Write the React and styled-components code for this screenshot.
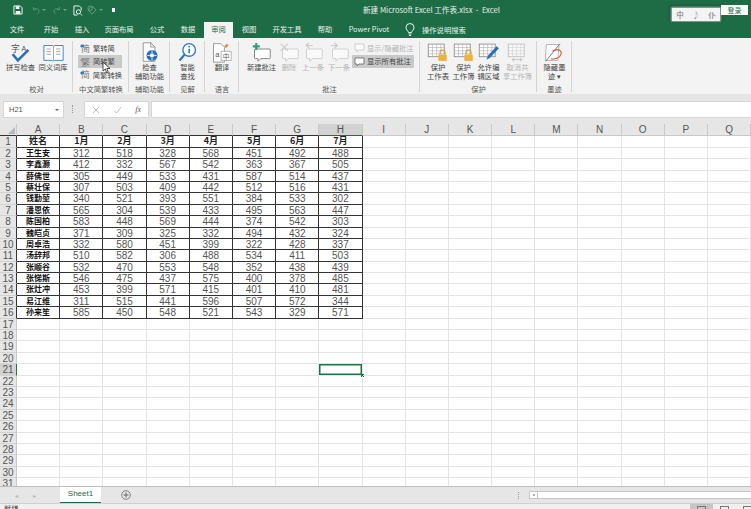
import styled, { createGlobalStyle } from "styled-components";

const columns = ["A", "B", "C", "D", "E", "F", "G", "H", "I", "J", "K", "L", "M", "N", "O", "P", "Q"];

const sheetData = [
  ["姓名", "1月", "2月", "3月", "4月", "5月", "6月", "7月"],
  ["王生安", 312, 518, 328, 568, 451, 492, 488],
  ["李鑫灏", 412, 332, 567, 542, 363, 367, 505],
  ["薛佛世", 305, 449, 533, 431, 587, 514, 437],
  ["蔡壮保", 307, 503, 409, 442, 512, 516, 431],
  ["钱勤堃", 340, 521, 393, 551, 384, 533, 302],
  ["潘恩依", 565, 304, 539, 433, 495, 563, 447],
  ["陈国柏", 583, 448, 569, 444, 374, 542, 303],
  ["魏皑贞", 371, 309, 325, 332, 494, 432, 324],
  ["周卓浩", 332, 580, 451, 399, 322, 428, 337],
  ["汤辞邦", 510, 582, 306, 488, 534, 411, 503],
  ["张顺谷", 532, 470, 553, 548, 352, 438, 439],
  ["张悌斯", 546, 475, 437, 575, 400, 378, 485],
  ["张灶冲", 453, 399, 571, 415, 401, 410, 481],
  ["易江维", 311, 515, 441, 596, 507, 572, 344],
  ["孙来笙", 585, 450, 548, 521, 543, 329, 571],
];

const tabs = [
  ["文件", 34],
  ["开始", 34],
  ["插入", 28],
  ["页面布局", 46],
  ["公式", 30],
  ["数据", 32],
  ["审阅", 29, true],
  ["视图", 32],
  ["开发工具", 44],
  ["帮助", 32],
  ["Power Pivot", 56],
];

const ROW_COUNT = 31;

const SpellIcon = () => (
  <svg width="24" height="24" viewBox="0 0 24 24">
    <text x="1" y="11" fontSize="10" fill="#555" fontFamily="Noto Sans CJK SC">字</text>
    <text x="13" y="10" fontSize="8" fill="#555" fontFamily="Liberation Sans">A</text>
    <path d="M3 14l6 7L21 9" fill="none" stroke="#2b6fb5" strokeWidth="3" />
  </svg>
);

const BookIcon = () => (
  <svg width="24" height="24" viewBox="0 0 24 24">
    <path d="M1 4h10l1 1 1-1h10v17H13l-1 1-1-1H1z" fill="#fff" stroke="#2b7cc2" />
    <path d="M12 5v16M4 8h5M4 11h5M4 14h5M15 8h5M15 11h5M15 14h5" stroke="#999" />
  </svg>
);

const SmallCharIcon = ({ char, color = "#2b7cc2" }) => (
  <svg width="11" height="11" viewBox="0 0 11 11">
    <text x="1" y="9.5" fontSize="9" fill="#777" fontFamily="Noto Sans CJK SC">{char}</text>
    <path d="M0 4l2-2v1h2v2H2v1z" fill={color} />
  </svg>
);

const CheckDocIcon = () => (
  <svg width="24" height="25" viewBox="0 0 24 25">
    <path d="M5 1h9l5 5v17H5z" fill="#fff" stroke="#888" />
    <path d="M14 1v5h5" fill="none" stroke="#888" />
    <circle cx="15.5" cy="16" r="6.5" fill="#2b6fb5" />
    <circle cx="15.5" cy="16" r="2.5" fill="#fff" />
    <path d="M15.5 10v3M15.5 19v3M10 16h3M18 16h3" stroke="#fff" />
  </svg>
);

const SearchIcon = () => (
  <svg width="24" height="25" viewBox="0 0 24 25">
    <circle cx="14.5" cy="9.5" r="7.5" fill="#fff" stroke="#2b7cc2" strokeWidth="1.6" />
    <path d="M9 15l-6 7" stroke="#2b6fb5" strokeWidth="2.6" />
    <path d="M14.5 8v5.5" stroke="#2b6fb5" strokeWidth="1.8" />
    <circle cx="14.5" cy="5.6" r="1" fill="#2b6fb5" />
  </svg>
);

const TranslateIcon = () => (
  <svg width="26" height="25" viewBox="0 0 26 25">
    <path d="M3 2h9l4 4v18H3z" fill="#fff" stroke="#888" />
    <path d="M16 5l3-3 2 2-3 3z" fill="#d98a3a" />
    <rect x="12" y="11" width="12" height="11" fill="#fff" stroke="#aaa" />
    <text x="5" y="18" fontSize="9" fill="#555" fontFamily="Liberation Sans">a</text>
    <text x="14" y="20" fontSize="8" fill="#555" fontFamily="Noto Sans CJK SC">中</text>
  </svg>
);

const NoteIcon = ({ mark, dim }) => (
  <svg width="24" height="24" viewBox="0 0 24 24" opacity={dim ? 0.55 : 1}>
    <path
      d="M5 8h16a1 1 0 0 1 1 1v9a1 1 0 0 1-1 1H11l-3 3v-3H5a1 1 0 0 1-1-1V9a1 1 0 0 1 1-1z"
      fill="#fff"
      stroke={dim ? "#aaa" : "#777"}
    />
    {mark === "new" && <path d="M6 1v8M2 5h8" stroke="#2f9e77" strokeWidth="2.4" />}
    {mark === "delete" && <path d="M2 2l8 8M10 2l-8 8" stroke="#999" strokeWidth="1.2" />}
    {mark === "prev" && <path d="M11 4H4M7 1L3.5 4 7 7" fill="none" stroke="#aaa" strokeWidth="1.4" />}
    {mark === "next" && <path d="M2 4h7M6 1l3.5 3L6 7" fill="none" stroke="#aaa" strokeWidth="1.4" />}
  </svg>
);

const SmallNoteIcon = ({ dim }) => (
  <svg width="11" height="11" viewBox="0 0 11 11" opacity={dim ? 0.6 : 1}>
    <path d="M1 2h9v6H5L3 10V8H1z" fill="#fff" stroke={dim ? "#aaa" : "#666"} strokeWidth="0.8" />
  </svg>
);

const ProtectIcon = ({ lock, pen, arrows, dim }) => (
  <svg width="26" height="25" viewBox="0 0 26 25" opacity={dim ? 0.5 : 1}>
    <rect x="1.5" y="2.5" width="19" height="15" fill="#fff" stroke="#888" />
    <path d="M1.5 6.5h19M1.5 10.5h19M1.5 14h19M6.5 3v14M11.5 3v14M16.5 3v14" stroke="#aaa" strokeWidth="0.7" />
    {lock && (
      <g>
        <path d="M15.5 15v-2.5a3 3 0 0 1 6 0V15" fill="none" stroke="#d99a2e" strokeWidth="1.3" />
        <rect x="13.5" y="15" width="10" height="7.5" fill="#f0b23c" />
      </g>
    )}
    {pen && <path d="M10 21l2-5L22 5l3 2.500L14 19z" fill="#2b6fb5" />}
    {arrows && <path d="M6 21h12M6 21l2.500-2M6 21l2.500 2M18 21l-2.500-2M18 21l-2.500 2" fill="none" stroke="#888" />}
  </svg>
);

const InkIcon = () => (
  <svg width="24" height="25" viewBox="0 0 24 25">
    <rect x="3" y="3" width="15" height="19" fill="#fff" stroke="#aaa" transform="skewX(-4)" />
    <path d="M2 23L19 2" stroke="#666" />
    <path d="M10 11c6-4 12-1 10 4-1 4-7 6-12 5" fill="none" stroke="#d2552f" strokeWidth="1.2" />
  </svg>
);

const BulbIcon = () => (
  <svg width="10" height="13" viewBox="0 0 10 13">
    <path d="M3.500 9.500C3 7.500 1 7 1 4.500a4 4 0 0 1 8 0C9 7 7 7.500 6.500 9.500zM3.500 11h3M4 12.500h2" fill="none" stroke="#fff" strokeWidth="0.9" />
  </svg>
);

const App = () => {
  return (
    <Page>
      <GlobalStyle />
      <TitleBar>
        <QuickAccess>
          <QatItem $width={18}>
            <svg width="10" height="10" viewBox="0 0 11 11">
              <path d="M1 1h7l2 2v7H1z" fill="none" stroke="#fff" />
              <path d="M3 1.500h4v3H3zM3 6.500h5V10H3z" fill="#fff" />
            </svg>
          </QatItem>
          <QatItem $width={11}>
            <svg width="10" height="9" viewBox="0 0 12 10">
              <path d="M3 1v3h3M3.500 4c2-2 6-1.500 6 2 0 1-.5 2-1.500 3" fill="none" stroke="#5f9a7c" strokeWidth="1.1" />
            </svg>
          </QatItem>
          <QatItem $width={10}><Caret /></QatItem>
          <QatItem $width={11}>
            <svg width="10" height="9" viewBox="0 0 12 10">
              <path d="M9 1v3H6M8.500 4c-2-2-6-1.500-6 2 0 1 .5 2 1.500 3" fill="none" stroke="#5f9a7c" strokeWidth="1.1" />
            </svg>
          </QatItem>
          <QatItem $width={10}><Caret /></QatItem>
          <QatItem $width={14}>
            <svg width="10" height="11" viewBox="0 0 11 12">
              <path d="M1 1h6l2 2v3M1 1v10h4" fill="none" stroke="#fff" />
              <circle cx="6" cy="7.500" r="2.300" fill="none" stroke="#fff" />
              <path d="M8 9.500l2 2" stroke="#fff" />
            </svg>
          </QatItem>
          <QatItem $width={12}>
            <svg width="10" height="10" viewBox="0 0 11 11">
              <path d="M5.500 1l4.500 4.500-4.500 4.500L1 5.500z" fill="none" stroke="#6aa185" />
              <circle cx="3.500" cy="3.500" r="2.500" fill="none" stroke="#6aa185" />
            </svg>
          </QatItem>
          <QatItem $width={13}><Caret /></QatItem>
          <MoreDot />
        </QuickAccess>
        <WindowTitle>新建 Microsoft Excel 工作表.xlsx&nbsp; - &nbsp;Excel</WindowTitle>
        <ImeBar>
          <span>中</span>
          <span>♪</span>
          <span>仆</span>
        </ImeBar>
        <LoginButton>登录</LoginButton>
      </TitleBar>

      <TabBar>
        {tabs.map(([label, width, active]) => (
          <Tab key={label} $width={width} $active={active}>
            {label}
          </Tab>
        ))}
        <SearchHint>
          <BulbIcon />
          <span>操作说明搜索</span>
        </SearchHint>
      </TabBar>

      <Ribbon>
        <Group $width={73}>
          <GroupBody>
            <BigButton $width={33}>
              <IconSlot><SpellIcon /></IconSlot>
              <BigLabel>拼写检查</BigLabel>
            </BigButton>
            <BigButton $width={32}>
              <IconSlot><BookIcon /></IconSlot>
              <BigLabel>同义词库</BigLabel>
            </BigButton>
          </GroupBody>
          <GroupLabel>校对</GroupLabel>
        </Group>

        <Group $width={56}>
          <SmallStack $left={5}>
            <SmallButton>
              <SmallCharIcon char="简" />
              繁转简
            </SmallButton>
            <SmallButton $active>
              <SmallCharIcon char="繁" color="#999" />
              简转繁
              <CursorArrow viewBox="0 0 9 13">
                <path d="M1 1v9l2.300-2 1.500 4 1.500-.6-1.500-3.900H8z" fill="#fff" stroke="#222" strokeWidth="0.8" />
              </CursorArrow>
            </SmallButton>
            <SmallButton>
              <SmallCharIcon char="简" />
              简繁转换
            </SmallButton>
          </SmallStack>
          <GroupLabel>中文简繁转换</GroupLabel>
        </Group>

        <Group $width={41}>
          <GroupBody>
            <BigButton $width={40}>
              <IconSlot><CheckDocIcon /></IconSlot>
              <BigLabel>检查</BigLabel>
              <BigLabel>辅助功能</BigLabel>
            </BigButton>
          </GroupBody>
          <GroupLabel>辅助功能</GroupLabel>
        </Group>

        <Group $width={35}>
          <GroupBody>
            <BigButton $width={34}>
              <IconSlot><SearchIcon /></IconSlot>
              <BigLabel>智能</BigLabel>
              <BigLabel>查找</BigLabel>
            </BigButton>
          </GroupBody>
          <GroupLabel>见解</GroupLabel>
        </Group>

        <Group $width={34}>
          <GroupBody>
            <BigButton $width={33}>
              <IconSlot><TranslateIcon /></IconSlot>
              <BigLabel>翻译</BigLabel>
            </BigButton>
          </GroupBody>
          <GroupLabel>语言</GroupLabel>
        </Group>

        <Group $width={181}>
          <GroupBody $left={6}>
            <BigButton $width={33}>
              <IconSlot><NoteIcon mark="new" /></IconSlot>
              <BigLabel>新建批注</BigLabel>
            </BigButton>
            <BigButton $width={22}>
              <IconSlot><NoteIcon mark="delete" dim /></IconSlot>
              <BigLabel $dim>删除</BigLabel>
            </BigButton>
            <BigButton $width={26}>
              <IconSlot><NoteIcon mark="prev" dim /></IconSlot>
              <BigLabel $dim>上一条</BigLabel>
            </BigButton>
            <BigButton $width={26}>
              <IconSlot><NoteIcon mark="next" dim /></IconSlot>
              <BigLabel $dim>下一条</BigLabel>
            </BigButton>
            <SmallStack $width={62}>
              <SmallButton $dim>
                <SmallNoteIcon dim />
                显示/隐藏批注
              </SmallButton>
              <SmallButton $active>
                <SmallNoteIcon />
                显示所有批注
              </SmallButton>
            </SmallStack>
          </GroupBody>
          <GroupLabel>批注</GroupLabel>
        </Group>

        <Group $width={117}>
          <GroupBody $left={5}>
            <BigButton $width={26}>
              <IconSlot><ProtectIcon lock /></IconSlot>
              <BigLabel>保护</BigLabel>
              <BigLabel>工作表</BigLabel>
            </BigButton>
            <BigButton $width={25}>
              <IconSlot><ProtectIcon lock /></IconSlot>
              <BigLabel>保护</BigLabel>
              <BigLabel>工作簿</BigLabel>
            </BigButton>
            <BigButton $width={25}>
              <IconSlot><ProtectIcon pen /></IconSlot>
              <BigLabel>允许编</BigLabel>
              <BigLabel>辑区域</BigLabel>
            </BigButton>
            <BigButton $width={33}>
              <IconSlot><ProtectIcon arrows dim /></IconSlot>
              <BigLabel $dim>取消共</BigLabel>
              <BigLabel $dim>享工作簿</BigLabel>
            </BigButton>
          </GroupBody>
          <GroupLabel>保护</GroupLabel>
        </Group>

        <Group $width={35}>
          <GroupBody>
            <BigButton $width={34}>
              <IconSlot><InkIcon /></IconSlot>
              <BigLabel>隐藏墨</BigLabel>
              <BigLabel>迹 ▾</BigLabel>
            </BigButton>
          </GroupBody>
          <GroupLabel>墨迹</GroupLabel>
        </Group>
      </Ribbon>

      <FormulaBar>
        <NameBox>
          H21
          <NameCaret />
        </NameBox>
        <Grip />
        <FormulaButtons>
          <svg width="8" height="8" viewBox="0 0 8 8">
            <path d="M1 1l6 6M7 1L1 7" stroke="#b5b5b5" strokeWidth="0.9" />
          </svg>
          <svg width="9" height="8" viewBox="0 0 9 8">
            <path d="M1 4.500L3.500 7 8 1" fill="none" stroke="#b5b5b5" strokeWidth="0.9" />
          </svg>
          <FxLabel>fx</FxLabel>
        </FormulaButtons>
        <FormulaInput />
      </FormulaBar>

      <SheetGrid>
        <CornerCell>
          <svg width="7" height="7" viewBox="0 0 7 7">
            <path d="M7 0v7H0z" fill="#b8b8b8" />
          </svg>
        </CornerCell>
        {columns.map((col, i) => (
          <ColumnHeader key={col} $selected={col === "H"} $inTable={i < 8}>
            {col}
          </ColumnHeader>
        ))}
        {Array.from({ length: ROW_COUNT }, (_, r) => (
          <Row key={r} rowIndex={r} />
        ))}
      </SheetGrid>

      <SheetBar>
        <TabArrow>◂</TabArrow>
        <TabArrow>▸</TabArrow>
        <SheetTab>Sheet1</SheetTab>
        <AddSheet>
          <svg width="10" height="10" viewBox="0 0 10 10">
            <circle cx="5" cy="5" r="4.300" fill="none" stroke="#777" strokeWidth="0.9" />
            <path d="M5 2.500v5M2.500 5h5" stroke="#666" strokeWidth="1" />
          </svg>
        </AddSheet>
        <ScrollGrip />
        <ScrollArrow>◂</ScrollArrow>
        <ScrollTrack />
      </SheetBar>

      <StatusBar>
        <StatusText>就绪</StatusText>
        <ViewGroup>
          <ViewButton $active />
          <ViewButton />
          <ViewButton />
        </ViewGroup>
      </StatusBar>
    </Page>
  );
};

const Row = ({ rowIndex }) => {
  const values = sheetData[rowIndex];
  const inTable = rowIndex < sheetData.length;
  return (
    <>
      <RowHeader $selected={rowIndex === 20} $inTable={inTable}>
        {rowIndex + 1}
      </RowHeader>
      {columns.map((col, c) => {
        const isData = inTable && c < 8;
        return (
          <Cell
            key={col}
            $data={isData}
            $title={isData && rowIndex === 0}
            $name={isData && c === 0}
            $selected={rowIndex === 20 && col === "H"}
          >
            {isData ? values[c] : null}
          </Cell>
        );
      })}
    </>
  );
};

export default App;

const uiFont = `"Noto Sans CJK SC", "Liberation Sans", sans-serif`;
const sheetFont = `"Liberation Sans Narrow", "Liberation Sans", "Noto Sans CJK SC", sans-serif`;
const excelGreen = "#1e6c46";

// Styled components
const GlobalStyle = createGlobalStyle`
  html, body {
    margin: 0;
    padding: 0;
    overflow: hidden;
    background: #fff;
  }
`;

const Page = styled.div`
  width: 751px;
  height: 509px;
  display: flex;
  flex-direction: column;
  overflow: hidden;
  font-family: ${uiFont};
  font-size: 7.3px;
  color: #444;
`;

const TitleBar = styled.div`
  height: 22px;
  flex: none;
  display: flex;
  align-items: center;
  background: ${excelGreen};
  color: #fff;
  padding-right: 3px;
`;

const QuickAccess = styled.div`
  width: 120px;
  padding-left: 13px;
  box-sizing: border-box;
  display: flex;
  align-items: center;
  height: 22px;
  padding-bottom: 2px;
`;

const QatItem = styled.div`
  width: ${(p) => p.$width}px;
  flex: none;
  display: flex;
  align-items: center;
`;

const Caret = styled.i`
  width: 0;
  height: 0;
  border-left: 2px solid transparent;
  border-right: 2px solid transparent;
  border-top: 2px solid #6aa185;
`;

const MoreDot = styled.i`
  width: 3px;
  height: 4px;
  background: #fff;
`;

const WindowTitle = styled.div`
  margin-left: 243px;
  font-size: 7.6px;
  white-space: nowrap;
  padding-bottom: 4px;
  color: #e8f1ec;
`;

const ImeBar = styled.div`
  margin-left: auto;
  margin-top: 7px;
  width: 48px;
  height: 13px;
  display: flex;
  align-items: center;
  justify-content: space-around;
  background: #f4f4f4;
  color: #999;
  font-size: 7.5px;
  font-weight: 700;
  box-shadow: 0 0 2px 1px #ffffffaa, 0 0 3px 2px #0f3d27;
`;

const LoginButton = styled.div`
  width: 27px;
  height: 10px;
  margin-left: 1px;
  margin-bottom: 2px;
  background: #fff;
  color: ${excelGreen};
  font-size: 7px;
  line-height: 10px;
  text-align: center;
`;

const TabBar = styled.div`
  height: 16px;
  flex: none;
  display: flex;
  background: ${excelGreen};
`;

const Tab = styled.div`
  width: ${(p) => p.$width}px;
  flex: none;
  text-align: center;
  line-height: 15px;
  white-space: nowrap;
  color: ${(p) => (p.$active ? excelGreen : "#e8f1ec")};
  background: ${(p) => (p.$active ? "#f3f3f3" : "transparent")};
`;

const SearchHint = styled.div`
  display: flex;
  align-items: center;
  height: 15px;
  margin-left: 8px;
  gap: 7px;
  color: #e8f1ec;
`;

const Ribbon = styled.div`
  height: 56px;
  flex: none;
  display: flex;
  background: #f3f3f3;
`;

const Group = styled.div`
  width: ${(p) => p.$width}px;
  flex: none;
  box-sizing: border-box;
  display: flex;
  flex-direction: column;
  padding-top: 3px;
  position: relative;

  &::after {
    content: "";
    position: absolute;
    right: 0;
    top: 3px;
    bottom: 2px;
    width: 1px;
    background: #d4d4d4;
  }
`;

const GroupBody = styled.div`
  flex: 1;
  display: flex;
  justify-content: center;
  ${(p) => p.$left && `justify-content: flex-start; padding-left: ${p.$left}px;`}
`;

const GroupLabel = styled.div`
  height: 10px;
  line-height: 10px;
  text-align: center;
  white-space: nowrap;
  color: #555;
`;

const BigButton = styled.div`
  width: ${(p) => p.$width}px;
  flex: none;
  display: flex;
  flex-direction: column;
  align-items: center;
`;

const IconSlot = styled.div`
  height: 22px;
  display: flex;
  align-items: center;
  justify-content: center;

  svg {
    height: 21px;
    width: auto;
  }
`;

const BigLabel = styled.div`
  line-height: 9px;
  white-space: nowrap;
  color: ${(p) => (p.$dim ? "#b3b3b3" : "#444")};
`;

const SmallStack = styled.div`
  flex: 1;
  display: flex;
  flex-direction: column;
  ${(p) => p.$left && `padding: 0 7px 0 ${p.$left}px;`}
  ${(p) => p.$width && `flex: none; width: ${p.$width}px;`}
`;

const SmallButton = styled.div`
  position: relative;
  height: 13.5px;
  display: flex;
  align-items: center;
  gap: 2px;
  padding-left: 2px;
  white-space: nowrap;
  color: ${(p) => (p.$dim ? "#b3b3b3" : "#444")};
  background: ${(p) => (p.$active ? "#c9c9c9" : "transparent")};
`;

const CursorArrow = styled.svg`
  position: absolute;
  left: 24px;
  top: 6px;
  width: 9px;
  height: 13px;
`;

const FormulaBar = styled.div`
  height: 30px;
  flex: none;
  box-sizing: border-box;
  padding: 7px 0 6px 3px;
  display: flex;
  align-items: stretch;
  background: #e6e6e6;
`;

const NameBox = styled.div`
  position: relative;
  width: 61px;
  box-sizing: border-box;
  background: #fff;
  border: 1px solid #d6d6d6;
  padding-left: 5px;
  line-height: 15px;
  font-size: 7.5px;
  font-family: "Liberation Sans", sans-serif;
  color: #555;
`;

const NameCaret = styled.i`
  position: absolute;
  right: 4px;
  top: 7px;
  width: 0;
  height: 0;
  border-left: 2.5px solid transparent;
  border-right: 2.5px solid transparent;
  border-top: 2.5px solid #666;
`;

const Grip = styled.div`
  width: 2px;
  height: 8px;
  margin: 4px 9px 0 8px;
  border-left: 1px dotted #999;
`;

const FormulaButtons = styled.div`
  width: 65px;
  box-sizing: border-box;
  background: #fff;
  border: 1px solid #d6d6d6;
  display: flex;
  align-items: center;
  justify-content: space-between;
  padding: 0 7px 0 7px;
`;

const FxLabel = styled.span`
  font-family: "Liberation Serif", serif;
  font-style: italic;
  font-size: 8px;
  color: #555;
`;

const FormulaInput = styled.div`
  flex: 1;
  margin-left: 2px;
  background: #fff;
  border: 1px solid #d6d6d6;
  border-right: 0;
`;

const SheetGrid = styled.div`
  flex: none;
  height: 362px;
  overflow: hidden;
  display: grid;
  grid-template-columns: 17px repeat(17, 43.2px);
  grid-template-rows: 12.4px;
  grid-auto-rows: 11.4px;
  background: #fff;
  font-family: ${sheetFont};
  font-size: 10px;
`;

const CornerCell = styled.div`
  background: #e6e6e6;
  display: flex;
  align-items: flex-end;
  justify-content: flex-end;
  padding: 0 1px 1px 0;
  border-right: 1px solid #c8c8c8;
  border-bottom: 1px solid #333;
  box-sizing: border-box;
`;

const ColumnHeader = styled.div`
  box-sizing: border-box;
  text-align: center;
  line-height: 12px;
  color: #555;
  background: ${(p) => (p.$selected ? "#d2d2d2" : "#e6e6e6")};
  border-right: 1px solid #c8c8c8;
  border-bottom: 1px solid ${(p) => (p.$selected ? "#217346" : p.$inTable ? "#333" : "#c8c8c8")};
`;

const RowHeader = styled.div`
  box-sizing: border-box;
  text-align: center;
  line-height: 11px;
  color: #555;
  background: ${(p) => (p.$selected ? "#d2d2d2" : "#e6e6e6")};
  border-bottom: 1px solid #d2d2d2;
  border-right: 1px solid ${(p) => (p.$selected ? "#217346" : p.$inTable ? "#333" : "#c8c8c8")};
`;

const Cell = styled.div`
  position: relative;
  box-sizing: border-box;
  text-align: center;
  line-height: 11px;
  white-space: nowrap;
  color: #555;
  border-right: 1px solid ${(p) => (p.$data ? "#333" : "#e4e4e4")};
  border-bottom: 1px solid ${(p) => (p.$data ? "#333" : "#e4e4e4")};
  ${(p) =>
    p.$name &&
    `
    font-family: "Noto Sans CJK SC", sans-serif;
    font-size: 8px;
    line-height: 10px;
    font-weight: 700;
    color: #111;
  `}
  ${(p) =>
    p.$title &&
    `
    font-family: "Noto Sans CJK SC", sans-serif;
    font-weight: 700;
    font-size: 9px;
    line-height: 10px;
    color: #222;
  `}
  ${(p) =>
    p.$selected &&
    `
    box-shadow: inset 0 0 0 1.5px #217346;
    &::after {
      content: "";
      position: absolute;
      right: -2px;
      bottom: -2px;
      width: 3px;
      height: 3px;
      background: #217346;
    }
  `}
`;

const SheetBar = styled.div`
  height: 17px;
  flex: none;
  box-sizing: border-box;
  display: flex;
  align-items: center;
  background: #e6e6e6;
  border-top: 1px solid #bdbdbd;
  padding-left: 15px;
`;

const TabArrow = styled.span`
  width: 18px;
  color: #b5b5b5;
  font-size: 6px;
  font-family: "DejaVu Sans", sans-serif;
`;

const SheetTab = styled.div`
  width: 41px;
  height: 16px;
  margin-left: 9px;
  box-sizing: border-box;
  align-self: flex-start;
  background: #fff;
  color: ${excelGreen};
  font-family: "Liberation Sans", sans-serif;
  font-size: 8px;
  line-height: 14px;
  text-align: center;
  border-bottom: 1.5px solid ${excelGreen};
`;

const AddSheet = styled.div`
  margin-left: 20px;
  display: flex;
`;

const ScrollGrip = styled.div`
  width: 1px;
  height: 7px;
  margin-left: 387px;
  border-left: 1px dotted #999;
`;

const ScrollArrow = styled.div`
  width: 9px;
  height: 8px;
  margin-left: 9px;
  box-sizing: border-box;
  background: #fff;
  border: 1px solid #c6c6c6;
  color: #555;
  font-size: 4px;
  line-height: 6px;
  text-align: center;
  font-family: "DejaVu Sans", sans-serif;
`;

const ScrollTrack = styled.div`
  flex: 1;
  height: 8px;
  box-sizing: border-box;
  background: #fff;
  border: 1px solid #c6c6c6;
  border-left: 0;
  border-right: 0;
`;

const StatusBar = styled.div`
  flex: 1;
  display: flex;
  background: #f0f0f0;
  border-top: 1px solid #cfcfcf;
  overflow: hidden;
`;

const StatusText = styled.div`
  margin-left: 4px;
  margin-right: auto;
  line-height: 9px;
`;

const ViewGroup = styled.div`
  display: flex;
  margin-right: -8px;
`;

const ViewButton = styled.div`
  width: 23px;
  display: flex;
  justify-content: center;
  background: ${(p) => (p.$active ? "#c6c6c6" : "transparent")};

  &::before {
    content: "";
    width: 9px;
    height: 6px;
    margin-top: 2px;
    box-sizing: border-box;
    border: 1px solid #777;
  }
`;
